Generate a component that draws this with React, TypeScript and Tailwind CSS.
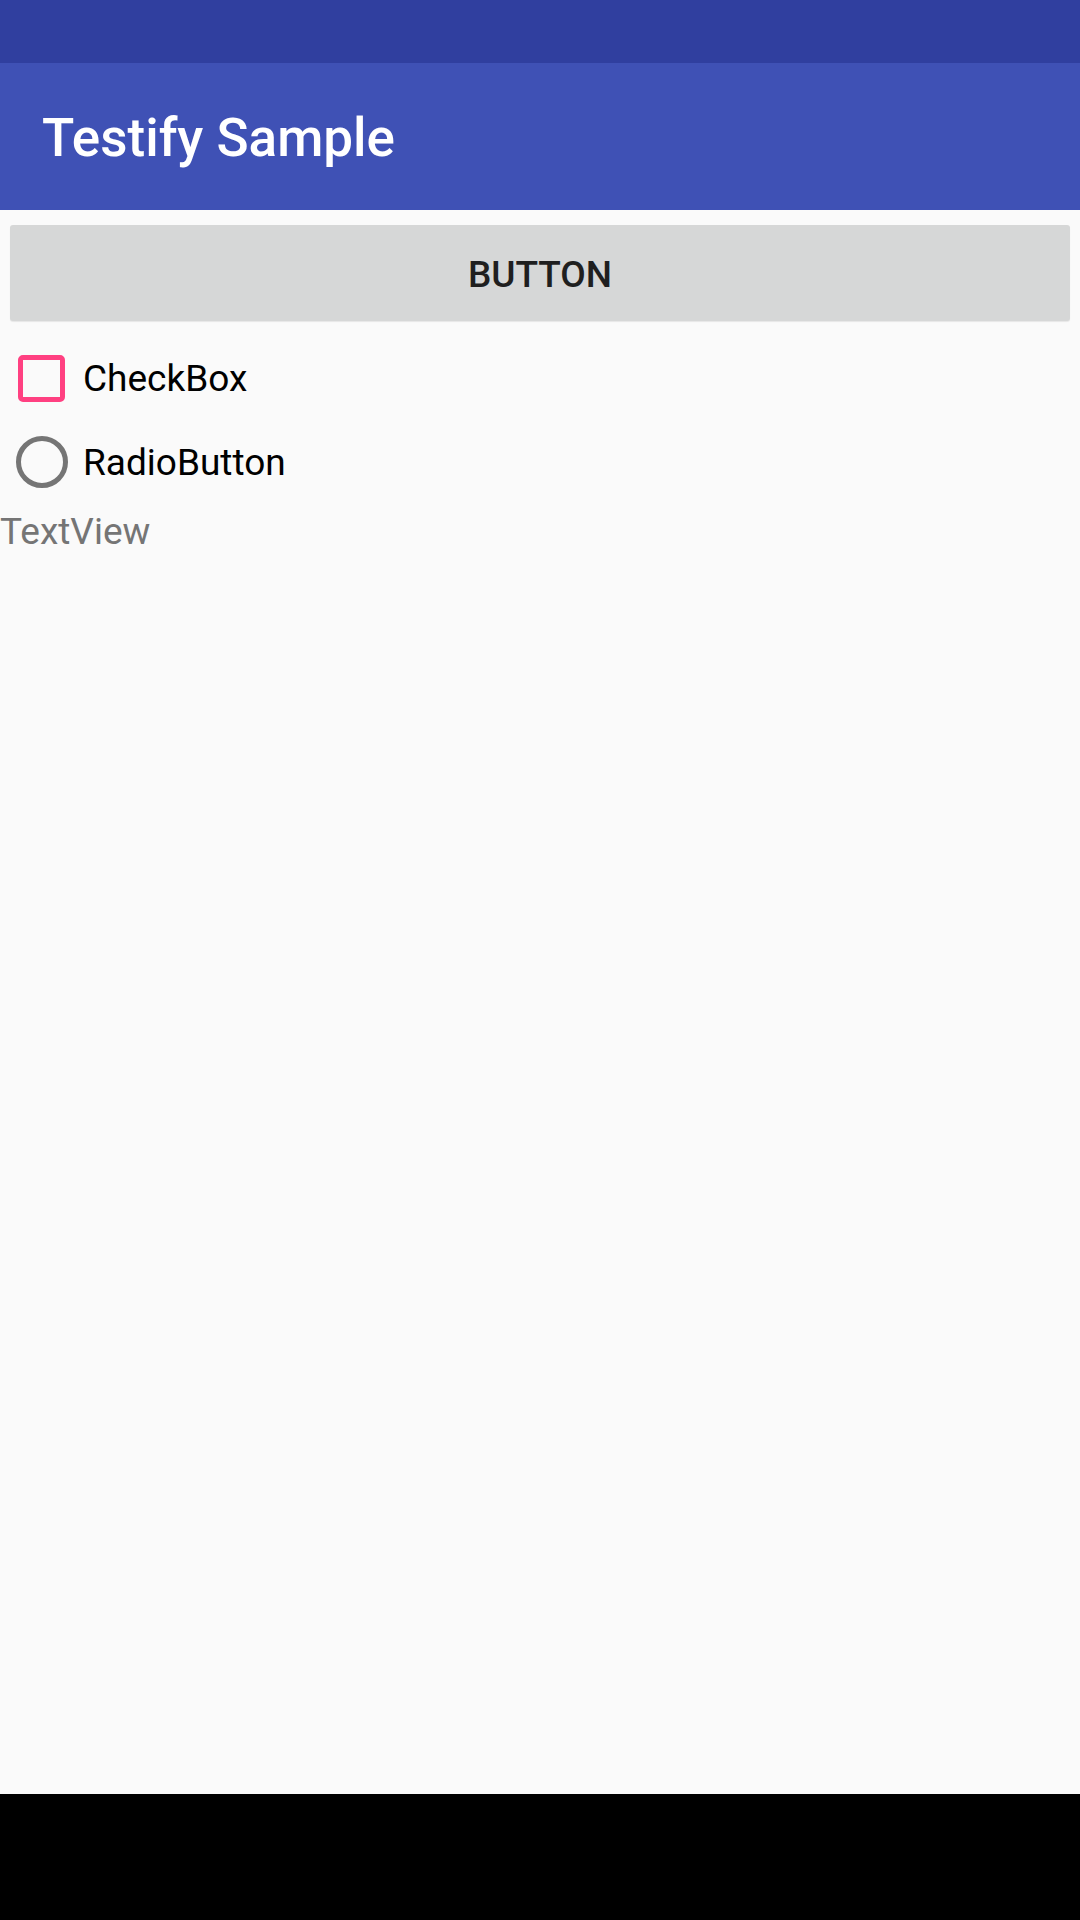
export default function App() {
  return (
    <div className="flex h-[1920px] w-[1080px] flex-col bg-[#fafafa] font-['Roboto',sans-serif]">
      {/* status bar */}
      <div className="h-[63px] bg-[#303f9f]" />

      {/* toolbar */}
      <div className="h-[147px] bg-[#3f51b5] pl-[42px] pt-[49px]">
        <h1 className="text-[53px] font-medium leading-[53px] text-white">Testify Sample</h1>
      </div>

      <div className="px-[10px] py-[15px]">
        <button
          type="button"
          className="flex h-[96px] w-full items-center justify-center rounded-[3px] bg-[#d6d7d7] pt-[3px] text-[37px] font-medium text-[#1f1f1f] shadow-[0_1px_1px_rgba(0,0,0,0.08)]"
        >
          BUTTON
        </button>
      </div>

      <label className="flex h-[84px] items-center">
        <span className="flex w-[83px] justify-center">
          <span className="h-[47px] w-[47px] rounded-[5px] border-[5px] border-[#ff4081]" />
        </span>
        <span className="pt-[2px] text-[37px] text-black">CheckBox</span>
      </label>

      <label className="flex h-[84px] items-center">
        <span className="flex w-[83px] justify-center">
          <span className="h-[52px] w-[52px] rounded-full border-[5.5px] border-[#757575]" />
        </span>
        <span className="pt-[2px] text-[37px] text-black">RadioButton</span>
      </label>

      <p className="text-[37px] text-[#757575]">TextView</p>

      <div className="flex-1" />

      {/* nav bar */}
      <div className="h-[126px] bg-black" />
    </div>
  );
}
